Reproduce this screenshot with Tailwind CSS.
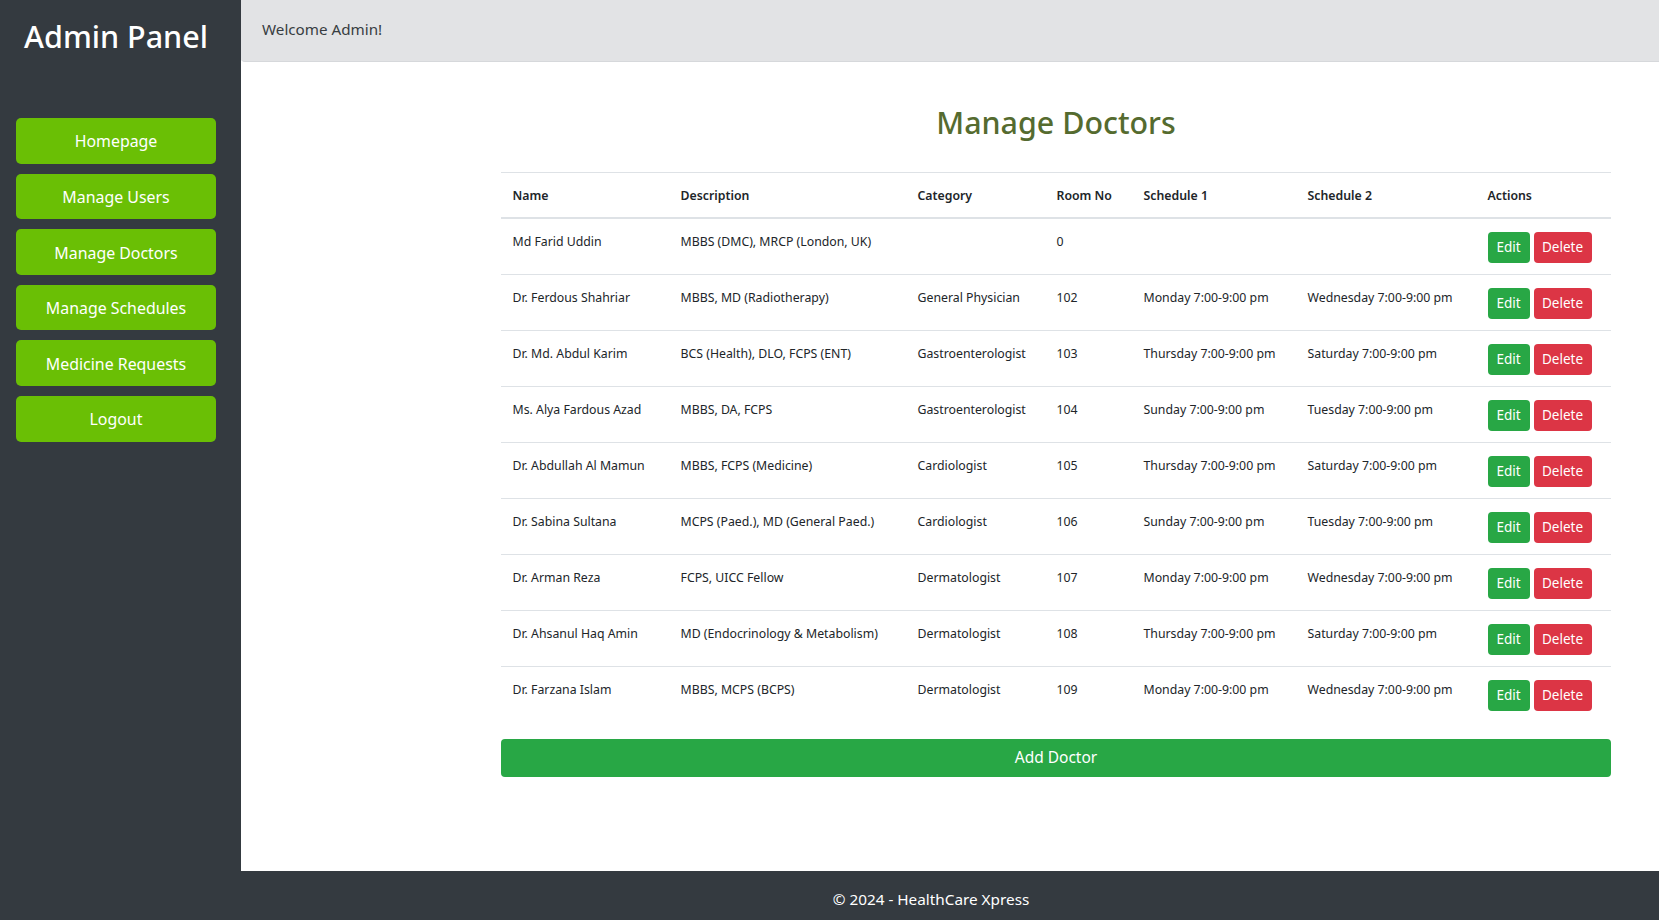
<!DOCTYPE html>
<html lang="en">
<head>
    <meta charset="UTF-8">
    <meta name="viewport" content="width=device-width, initial-scale=1.0">
    <title>Manage Doctors</title>
    <script src="https://cdn.jsdelivr.net/npm/@tailwindcss/browser@4"></script>
</head>

<body class="bg-white h-[920px] overflow-hidden flex flex-col font-['Noto_Sans',sans-serif]">
    <div class="flex flex-1 min-h-0">
        <!-- Sidebar -->
        <aside class="w-[241px] shrink-0 bg-[#343a40] pl-4 pr-[25px] pt-[14px]">
            <h2 class="text-white text-[30.5px] leading-[45px] font-medium text-center whitespace-nowrap">Admin Panel</h2>
            <nav class="mt-[59px] flex flex-col gap-[10px]">
                <a href="#" class="h-[45.6px] pt-[3px] flex items-center justify-center rounded-[5px] bg-[#6abf05] text-white text-[15.9px]">Homepage</a>
                <a href="#" class="h-[45.6px] pt-[3px] flex items-center justify-center rounded-[5px] bg-[#6abf05] text-white text-[15.9px]">Manage Users</a>
                <a href="#" class="h-[45.6px] pt-[3px] flex items-center justify-center rounded-[5px] bg-[#6abf05] text-white text-[15.9px]">Manage Doctors</a>
                <a href="#" class="h-[45.6px] pt-[3px] flex items-center justify-center rounded-[5px] bg-[#6abf05] text-white text-[15.9px]">Manage Schedules</a>
                <a href="#" class="h-[45.6px] pt-[3px] flex items-center justify-center rounded-[5px] bg-[#6abf05] text-white text-[15.9px]">Medicine Requests</a>
                <a href="#" class="h-[45.6px] pt-[3px] flex items-center justify-center rounded-[5px] bg-[#6abf05] text-white text-[15.9px]">Logout</a>
            </nav>
        </aside>

        <main class="flex-1 min-w-0">
            <div class="h-[62px] pb-[2px] bg-[#e2e3e5] border-b border-[#d6d8db] rounded-bl-[4px] pl-[21px] flex items-center text-[#383d41] text-[15.2px]">Welcome Admin!</div>

            <div class="ml-[260px] mr-[48px]">
                <h1 class="mt-[38px] text-center text-[#556b2f] text-[30.4px] leading-[46px] font-medium">Manage Doctors</h1>

                <!-- Doctors table -->
                <table class="mt-[26px] w-full table-fixed border-collapse text-[12.3px] leading-[19px] text-[#212529] [&_th]:px-[11.5px] [&_th]:pt-[2px] [&_th]:text-left [&_th]:font-semibold [&_th]:align-middle [&_td]:px-[11.5px] [&_td]:pt-[13px] [&_td]:pb-[11px] [&_td]:align-top [&_td]:border-b [&_td]:border-[#dee2e6]">
                    <thead>
                        <tr class="h-[45px] border-t border-b-2 border-[#dee2e6]">
                            <th class="w-[168px]">Name</th>
                            <th class="w-[237px]">Description</th>
                            <th class="w-[139px]">Category</th>
                            <th class="w-[87px]">Room No</th>
                            <th class="w-[164px]">Schedule 1</th>
                            <th class="w-[180px]">Schedule 2</th>
                            <th>Actions</th>
                        </tr>
                    </thead>
                    <tbody>
                        <tr>
                            <td>Md Farid Uddin</td><td>MBBS (DMC), MRCP (London, UK)</td><td></td><td>0</td><td></td><td></td>
                            <td><div class="flex gap-1"><button class="h-[31px] w-[42px] rounded-[4px] bg-[#28a745] text-white text-[13.5px]">Edit</button><button class="h-[31px] w-[58px] rounded-[4px] bg-[#dc3545] text-white text-[13.5px]">Delete</button></div></td>
                        </tr>
                        <tr>
                            <td>Dr. Ferdous Shahriar</td><td>MBBS, MD (Radiotherapy)</td><td>General Physician</td><td>102</td><td>Monday 7:00-9:00 pm</td><td>Wednesday 7:00-9:00 pm</td>
                            <td><div class="flex gap-1"><button class="h-[31px] w-[42px] rounded-[4px] bg-[#28a745] text-white text-[13.5px]">Edit</button><button class="h-[31px] w-[58px] rounded-[4px] bg-[#dc3545] text-white text-[13.5px]">Delete</button></div></td>
                        </tr>
                        <tr>
                            <td>Dr. Md. Abdul Karim</td><td>BCS (Health), DLO, FCPS (ENT)</td><td>Gastroenterologist</td><td>103</td><td>Thursday 7:00-9:00 pm</td><td>Saturday 7:00-9:00 pm</td>
                            <td><div class="flex gap-1"><button class="h-[31px] w-[42px] rounded-[4px] bg-[#28a745] text-white text-[13.5px]">Edit</button><button class="h-[31px] w-[58px] rounded-[4px] bg-[#dc3545] text-white text-[13.5px]">Delete</button></div></td>
                        </tr>
                        <tr>
                            <td>Ms. Alya Fardous Azad</td><td>MBBS, DA, FCPS</td><td>Gastroenterologist</td><td>104</td><td>Sunday 7:00-9:00 pm</td><td>Tuesday 7:00-9:00 pm</td>
                            <td><div class="flex gap-1"><button class="h-[31px] w-[42px] rounded-[4px] bg-[#28a745] text-white text-[13.5px]">Edit</button><button class="h-[31px] w-[58px] rounded-[4px] bg-[#dc3545] text-white text-[13.5px]">Delete</button></div></td>
                        </tr>
                        <tr>
                            <td>Dr. Abdullah Al Mamun</td><td>MBBS, FCPS (Medicine)</td><td>Cardiologist</td><td>105</td><td>Thursday 7:00-9:00 pm</td><td>Saturday 7:00-9:00 pm</td>
                            <td><div class="flex gap-1"><button class="h-[31px] w-[42px] rounded-[4px] bg-[#28a745] text-white text-[13.5px]">Edit</button><button class="h-[31px] w-[58px] rounded-[4px] bg-[#dc3545] text-white text-[13.5px]">Delete</button></div></td>
                        </tr>
                        <tr>
                            <td>Dr. Sabina Sultana</td><td>MCPS (Paed.), MD (General Paed.)</td><td>Cardiologist</td><td>106</td><td>Sunday 7:00-9:00 pm</td><td>Tuesday 7:00-9:00 pm</td>
                            <td><div class="flex gap-1"><button class="h-[31px] w-[42px] rounded-[4px] bg-[#28a745] text-white text-[13.5px]">Edit</button><button class="h-[31px] w-[58px] rounded-[4px] bg-[#dc3545] text-white text-[13.5px]">Delete</button></div></td>
                        </tr>
                        <tr>
                            <td>Dr. Arman Reza</td><td>FCPS, UICC Fellow</td><td>Dermatologist</td><td>107</td><td>Monday 7:00-9:00 pm</td><td>Wednesday 7:00-9:00 pm</td>
                            <td><div class="flex gap-1"><button class="h-[31px] w-[42px] rounded-[4px] bg-[#28a745] text-white text-[13.5px]">Edit</button><button class="h-[31px] w-[58px] rounded-[4px] bg-[#dc3545] text-white text-[13.5px]">Delete</button></div></td>
                        </tr>
                        <tr>
                            <td>Dr. Ahsanul Haq Amin</td><td>MD (Endocrinology &amp; Metabolism)</td><td>Dermatologist</td><td>108</td><td>Thursday 7:00-9:00 pm</td><td>Saturday 7:00-9:00 pm</td>
                            <td><div class="flex gap-1"><button class="h-[31px] w-[42px] rounded-[4px] bg-[#28a745] text-white text-[13.5px]">Edit</button><button class="h-[31px] w-[58px] rounded-[4px] bg-[#dc3545] text-white text-[13.5px]">Delete</button></div></td>
                        </tr>
                        <tr>
                            <td class="!border-b-0">Dr. Farzana Islam</td><td class="!border-b-0">MBBS, MCPS (BCPS)</td><td class="!border-b-0">Dermatologist</td><td class="!border-b-0">109</td><td class="!border-b-0">Monday 7:00-9:00 pm</td><td class="!border-b-0">Wednesday 7:00-9:00 pm</td>
                            <td class="!border-b-0"><div class="flex gap-1"><button class="h-[31px] w-[42px] rounded-[4px] bg-[#28a745] text-white text-[13.5px]">Edit</button><button class="h-[31px] w-[58px] rounded-[4px] bg-[#dc3545] text-white text-[13.5px]">Delete</button></div></td>
                        </tr>
                    </tbody>
                </table>

                <button class="mt-[17px] block w-full h-[38px] rounded-[4px] bg-[#28a745] text-white text-[15.5px]">Add Doctor</button>
            </div>
        </main>
    </div>

    <footer class="h-[49px] shrink-0 bg-[#343a40] pt-[16px] pl-[203px] text-center leading-[24px] text-white text-[15.3px]">© 2024 - HealthCare Xpress</footer>
</body>
</html>
